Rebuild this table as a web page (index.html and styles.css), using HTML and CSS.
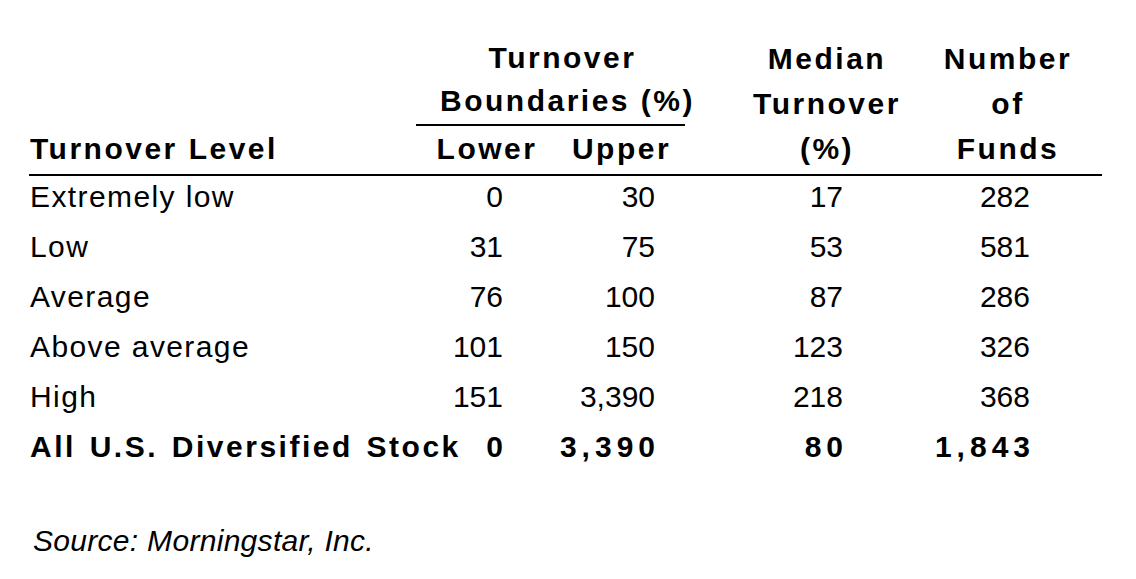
FILE: index.html
```html
<!DOCTYPE html>
<html lang="en">
<head>
<meta charset="utf-8">
<title>Turnover Levels</title>
<link rel="stylesheet" href="styles.css">
</head>
<body>
<div class="page">
  <div class="thead">
    <div class="hcell group">Turnover<br>Boundaries (%)</div>
    <div class="hcell level">Turnover Level</div>
    <div class="hcell lower">Lower</div>
    <div class="hcell upper">Upper</div>
    <div class="hcell median">Median<br>Turnover<br>(%)</div>
    <div class="hcell funds">Number<br>of<br>Funds</div>
  </div>
  <div class="tbody">
    <div class="cell label">Extremely low</div>
    <div class="cell num c-lower">0</div>
    <div class="cell num c-upper">30</div>
    <div class="cell num c-median">17</div>
    <div class="cell num c-funds">282</div>

    <div class="cell label">Low</div>
    <div class="cell num c-lower">31</div>
    <div class="cell num c-upper">75</div>
    <div class="cell num c-median">53</div>
    <div class="cell num c-funds">581</div>

    <div class="cell label">Average</div>
    <div class="cell num c-lower">76</div>
    <div class="cell num c-upper">100</div>
    <div class="cell num c-median">87</div>
    <div class="cell num c-funds">286</div>

    <div class="cell label">Above average</div>
    <div class="cell num c-lower">101</div>
    <div class="cell num c-upper">150</div>
    <div class="cell num c-median">123</div>
    <div class="cell num c-funds">326</div>

    <div class="cell label">High</div>
    <div class="cell num c-lower">151</div>
    <div class="cell num c-upper">3,390</div>
    <div class="cell num c-median">218</div>
    <div class="cell num c-funds">368</div>

    <div class="cell label total">All U.S. Diversified Stock</div>
    <div class="cell num c-lower total"><span class="tnum">0</span></div>
    <div class="cell num c-upper total"><span class="tnum">3,390</span></div>
    <div class="cell num c-median total"><span class="tnum">80</span></div>
    <div class="cell num c-funds total"><span class="tnum">1,843</span></div>
  </div>
  <p class="source">Source: Morningstar, Inc.</p>
</div>
</body>
</html>
```

FILE: styles.css
```css
html, body {
  margin: 0;
  padding: 0;
  background: #ffffff;
}

body {
  font-family: "Liberation Sans", Arial, sans-serif;
  font-size: 30px;
  color: #000000;
}

.page {
  margin-left: 29px;
  width: 1073px;
  padding-top: 36px;
}

.thead,
.tbody {
  display: grid;
  grid-template-columns: 387px 142px 127px 229px 188px;
}

.thead {
  grid-template-rows: auto auto;
  border-bottom: 2px solid #000;
  padding-bottom: 3px;
}

.tbody {
  margin-top: -4px;
}

.hcell {
  font-weight: bold;
  letter-spacing: 2.5px;
  line-height: 43px;
  white-space: nowrap;
}

.group {
  grid-column: 2 / 4;
  grid-row: 1;
  text-align: center;
  padding-left: 24px;
  padding-bottom: 2px;
  border-bottom: 2px solid #000;
}

.level,
.lower,
.upper {
  grid-row: 2;
  line-height: 45px;
}

.level {
  grid-column: 1;
  padding-left: 1px;
}

.lower {
  grid-column: 2;
  text-align: center;
}

.upper {
  grid-column: 3;
  text-align: center;
}

.median,
.funds {
  grid-row: 1 / 3;
  align-self: end;
  line-height: 45px;
  text-align: center;
}

.median {
  grid-column: 4;
  padding-left: 55px;
}

.funds {
  grid-column: 5;
}

.cell {
  line-height: 50px;
  white-space: nowrap;
}

.label {
  padding-left: 1px;
  letter-spacing: 1.4px;
}

.num {
  text-align: right;
}

.c-lower { padding-right: 55px; }
.c-upper { padding-right: 30px; }
.c-median { padding-right: 71px; }
.c-funds { padding-right: 72px; }

.total {
  font-weight: bold;
}

.label.total {
  letter-spacing: 2.5px;
  word-spacing: 3px;
}

.tnum {
  letter-spacing: 5px;
  margin-right: -5px;
}

.source {
  margin: 44px 0 0 0;
  padding-left: 4px;
  font-style: italic;
  letter-spacing: 0.3px;
  line-height: 50px;
}
```
